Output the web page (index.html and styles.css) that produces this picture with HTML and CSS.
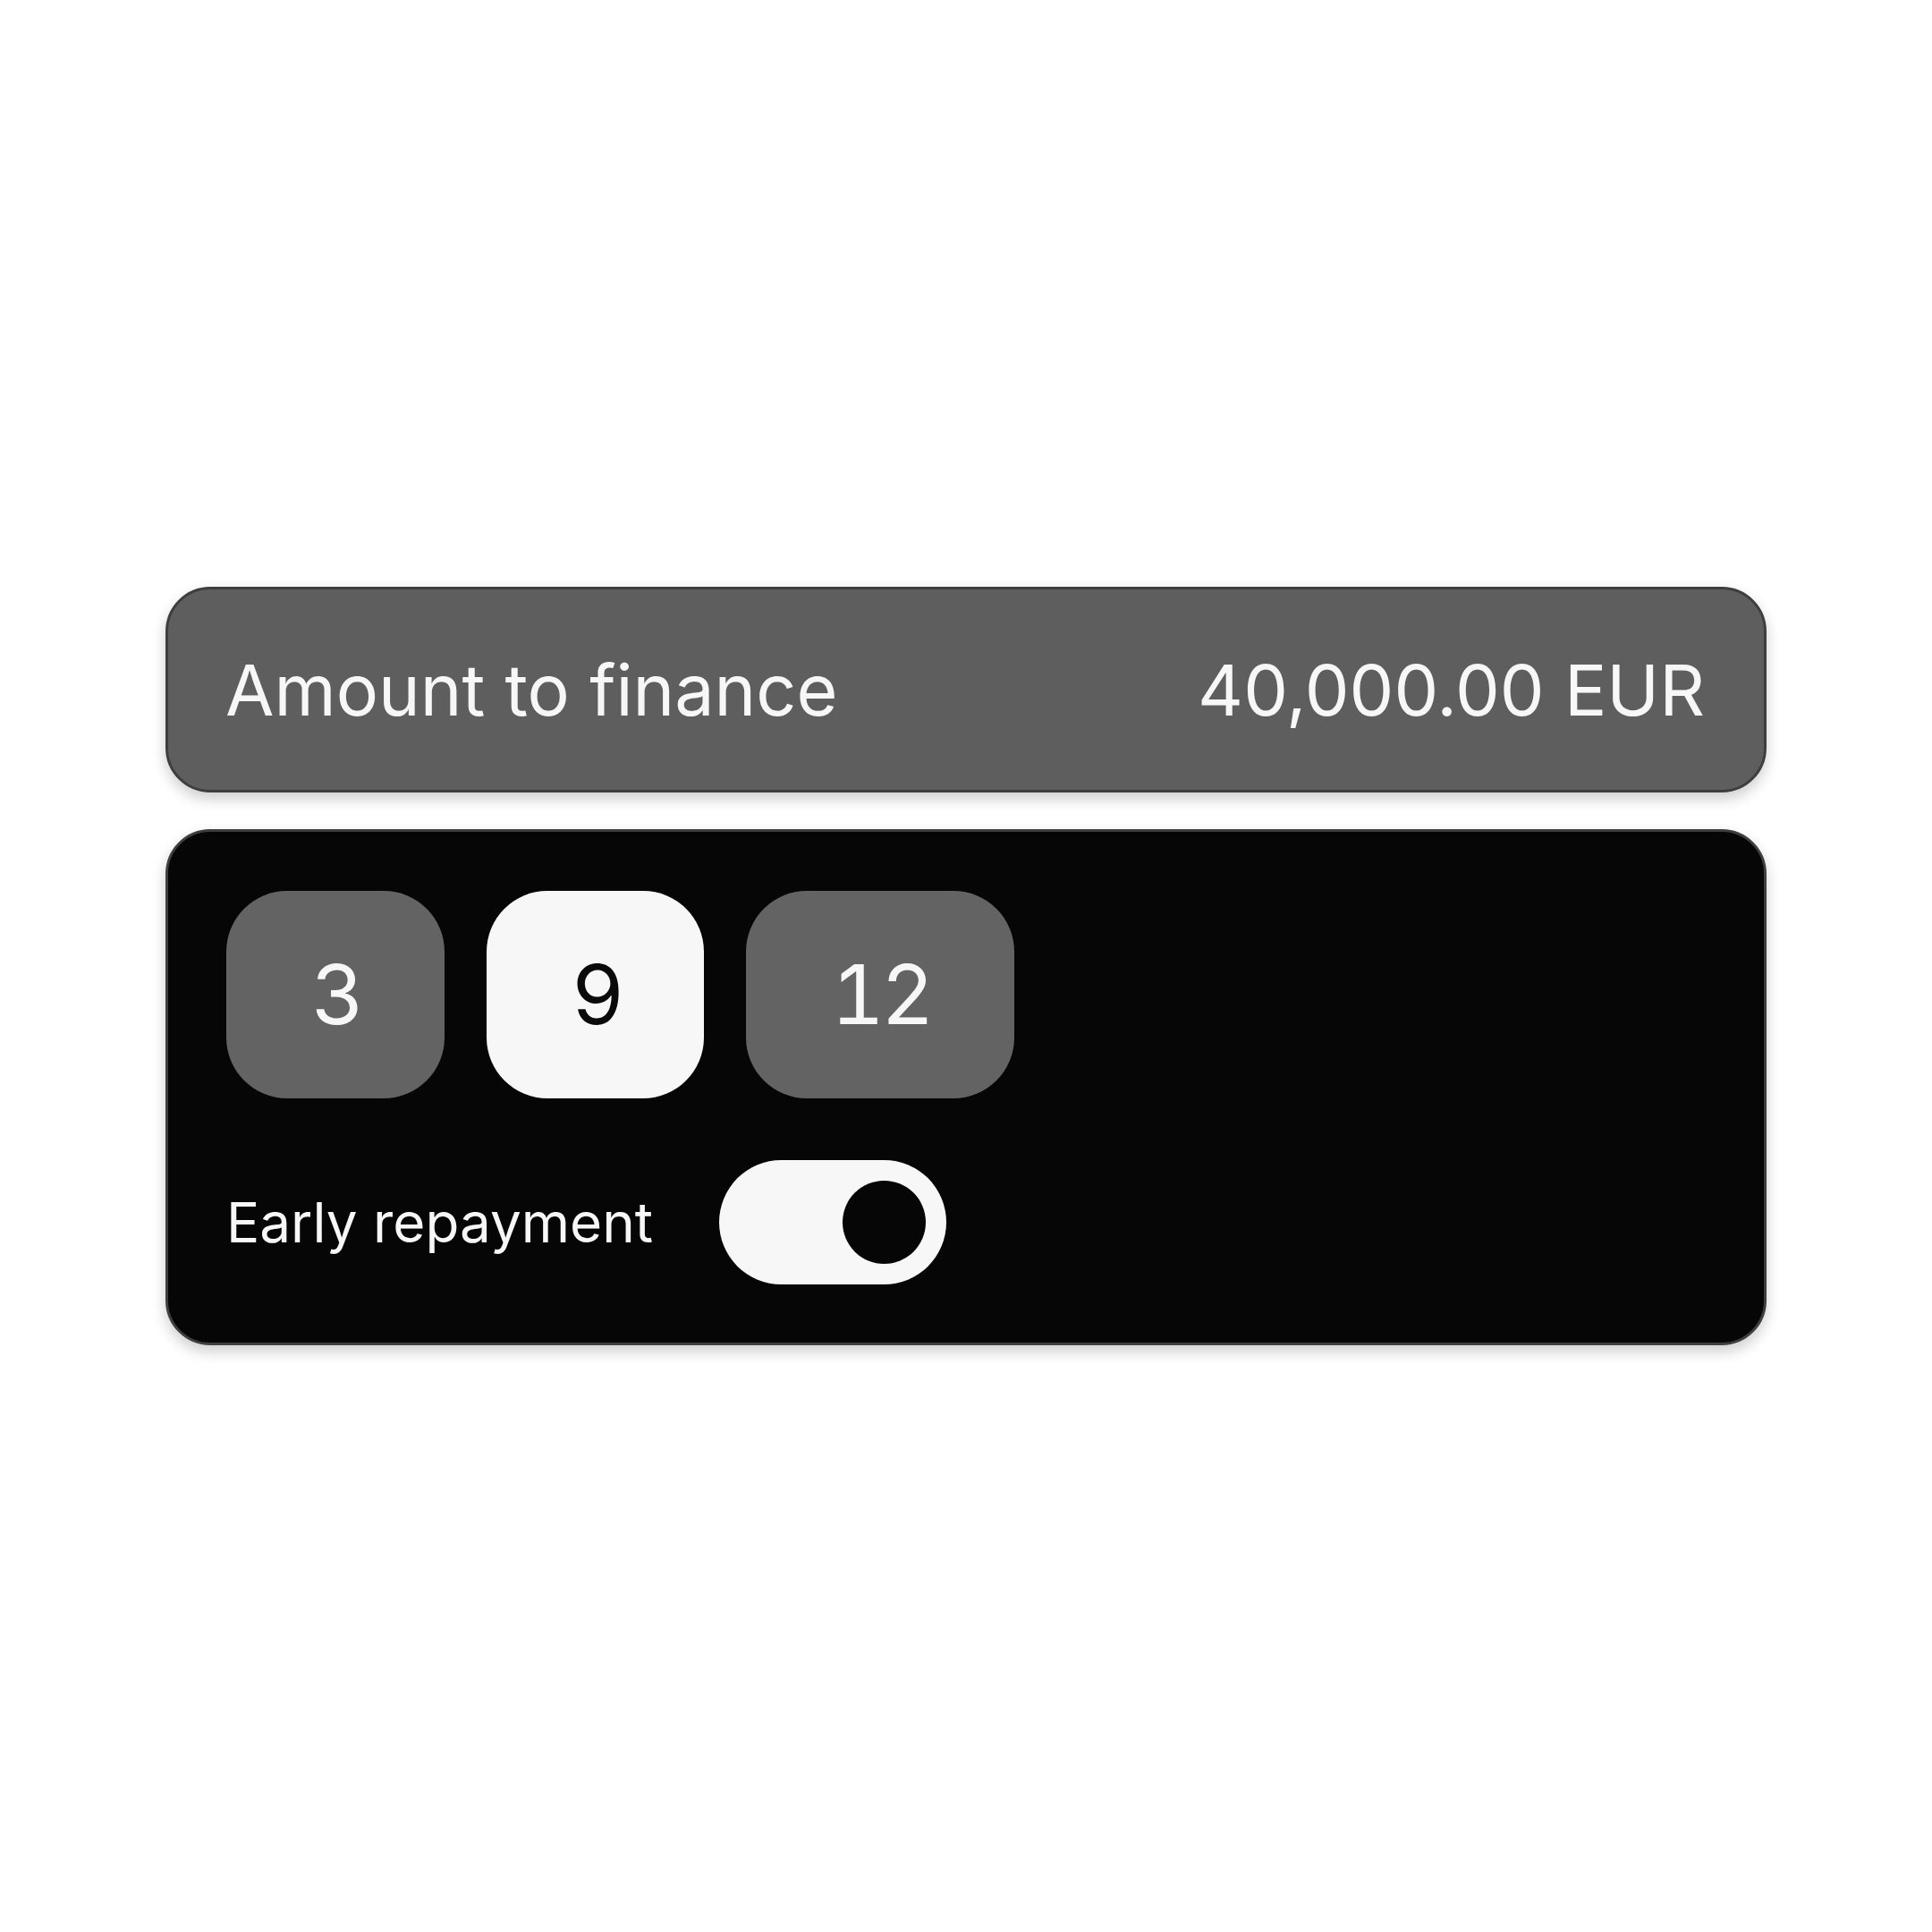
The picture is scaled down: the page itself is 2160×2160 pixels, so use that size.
FILE: index.html
```html
<!DOCTYPE html>
<html lang="en">
<head>
<meta charset="utf-8">
<title>Financing</title>
<link rel="stylesheet" href="styles.css">
</head>
<body>
<main class="stack">
  <section class="card amount-card">
    <span class="amount-label">Amount to finance</span>
    <span class="amount-value">40,000.00 EUR</span>
  </section>
  <section class="card options-card">
    <div class="terms">
      <button class="term">3</button>
      <button class="term term-active">9</button>
      <button class="term">12</button>
    </div>
    <div class="repay-row">
      <span class="repay-label">Early repayment</span>
      <span class="toggle"><span class="knob"></span></span>
    </div>
  </section>
</main>
</body>
</html>
```
FILE: styles.css
```css
html, body {
  margin: 0;
  padding: 0;
  background: #ffffff;
}
body {
  min-height: 100vh;
  display: flex;
  align-items: center;
  justify-content: center;
  font-family: "Inter", "Liberation Sans", sans-serif;
  color: #f7f7f7;
}
.stack {
  width: 1790px;
  display: flex;
  flex-direction: column;
  gap: 41px;
}
.card {
  box-sizing: border-box;
  border: 3px solid #3e3e3e;
  border-radius: 50px;
  box-shadow: 0 7px 16px rgba(0, 0, 0, 0.2);
}
.amount-card {
  height: 230px;
  background: #5e5e5e;
  padding: 0 66px 0 64px;
  display: flex;
  align-items: center;
  justify-content: space-between;
  font-size: 79px;
  line-height: 1;
}
.options-card {
  background: #060606;
  padding: 66px 65px 65px;
  display: flex;
  flex-direction: column;
  gap: 69px;
}
.terms {
  display: flex;
  gap: 47px;
}
.term {
  height: 232px;
  padding: 0 93px 0 95px;
  border: none;
  border-radius: 68px;
  background: #636363;
  color: #f7f7f7;
  font-family: "Inter", "Liberation Sans", sans-serif;
  font-size: 92px;
  line-height: 1;
  letter-spacing: -4px;
  font-variant-numeric: tabular-nums;
}
.term-active {
  background: #f7f7f7;
  color: #0a0a0a;
}
.repay-row {
  display: flex;
  align-items: center;
  gap: 74px;
}
.repay-label {
  font-size: 62px;
  line-height: 1;
}
.toggle {
  box-sizing: border-box;
  width: 254px;
  height: 139px;
  border-radius: 70px;
  background: #f7f7f7;
  padding: 23px;
  display: flex;
  justify-content: flex-end;
  align-items: center;
}
.knob {
  width: 93px;
  height: 93px;
  border-radius: 50%;
  background: #060606;
}
```
